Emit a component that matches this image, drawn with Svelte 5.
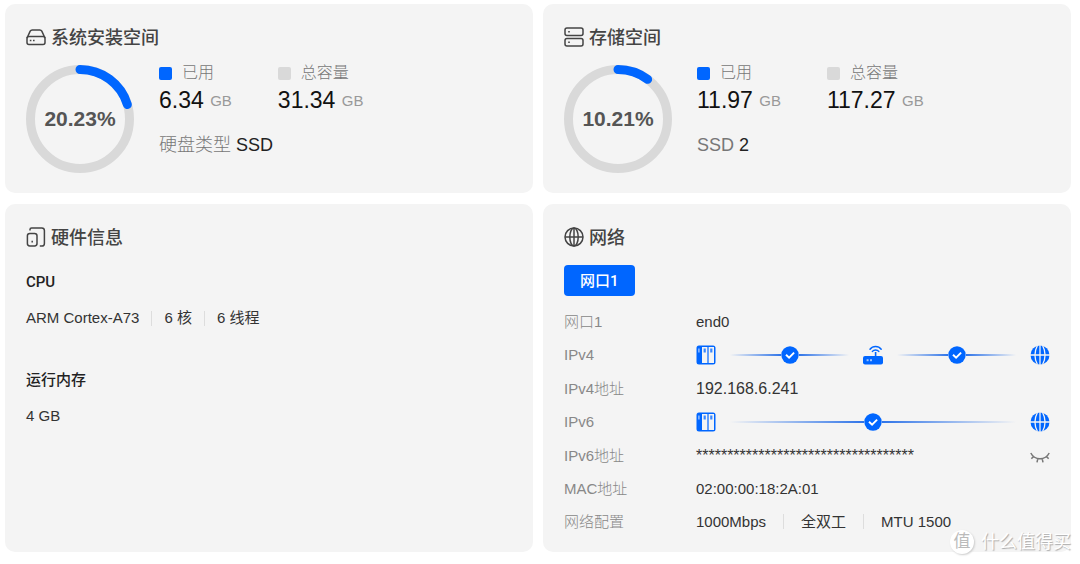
<script>
    const ringRadius = 49.5;
    const ringLength = 2 * Math.PI * ringRadius;

    const storages = [
        {
            title: '系统安装空间',
            icon: 'disk',
            percent: 20.23,
            used: '6.34',
            total: '31.34',
            type: '硬盘类型',
            typeValue: 'SSD'
        },
        {
            title: '存储空间',
            icon: 'stack',
            percent: 10.21,
            used: '11.97',
            total: '117.27',
            type: 'SSD',
            typeValue: '2'
        }
    ];

    const cpu = ['ARM Cortex-A73', '6 核', '6 线程'];
    const netConfig = ['1000Mbps', '全双工', 'MTU 1500'];

    let showIpv6 = $state(false);
    const ipv6 = 'fe80::18ff:fe00:2a01';
</script>

{#snippet nas()}
    <svg class="node" viewBox="0 0 20 20" aria-hidden="true">
        <rect x="0.5" y="0.5" width="19" height="19" rx="2.5" fill="#0066ff" />
        <rect x="6" y="2" width="5.4" height="16" fill="#f4f4f4" />
        <rect x="12.6" y="2" width="5.4" height="16" fill="#f4f4f4" />
        <rect x="2.2" y="3.5" width="1.4" height="4" fill="#9cc2ff" />
        <rect x="7.6" y="3.5" width="2.2" height="4" fill="#3a88ff" />
        <rect x="14.2" y="3.5" width="2.2" height="4" fill="#3a88ff" />
    </svg>
{/snippet}

{#snippet router()}
    <svg class="node" viewBox="0 0 20 20" aria-hidden="true">
        <path d="M7 4.2C9.8 0.6 15.4 0.6 18.2 4.2M9.4 6.4C11 4.4 14.2 4.4 15.8 6.4" fill="none" stroke="#0066ff" stroke-width="1.5" stroke-linecap="round" />
        <path d="M12.6 7V12" stroke="#0066ff" stroke-width="1.6" />
        <rect x="0" y="11" width="20" height="8.5" rx="2" fill="#0066ff" />
        <rect x="3.6" y="14.2" width="2" height="2" fill="#9cc2ff" />
        <rect x="7" y="14.2" width="2" height="2" fill="#9cc2ff" />
    </svg>
{/snippet}

{#snippet world()}
    <svg class="node" viewBox="0 0 20 20" aria-hidden="true">
        <circle cx="10" cy="10" r="9.5" fill="#0066ff" />
        <path d="M0 10H20M10 0V20M7.4 0.5C4.3 6.5 4.3 13.5 7.4 19.5M12.6 0.5C15.7 6.5 15.7 13.5 12.6 19.5" fill="none" stroke="#f4f4f4" stroke-width="1.3" />
    </svg>
{/snippet}

{#snippet link()}
    <span class="link">
        <span class="line"></span>
        <svg class="check" viewBox="0 0 18 18" aria-hidden="true">
            <circle cx="9" cy="9" r="8.7" fill="#0066ff" />
            <path d="M5 8.7L8.1 11.7L13.1 6.7" fill="none" stroke="#fff" stroke-width="1.9" />
        </svg>
        <span class="line right"></span>
    </span>
{/snippet}

<main>
    <div class="dashboard">
        <!-- Storage cards -->
        {#each storages as item}
            <section class="card">
                <h2>
                    <svg class="icon" viewBox="0 0 20 20" aria-hidden="true">
                        {#if item.icon === 'disk'}
                            <path d="M1 11L4.2 4.2Q4.8 3 6.2 3H13.8Q15.2 3 15.8 4.2L19 11" />
                            <rect x="1" y="9.5" width="18" height="8" rx="2" />
                            <path d="M3.8 13.5H5.4M7 13.5H8.6" />
                        {:else}
                            <rect x="1" y="1" width="18" height="7.5" rx="2" />
                            <rect x="1" y="11.5" width="18" height="7.5" rx="2" />
                            <path d="M4.2 4.8H5.8M4.2 15.2H5.8" />
                        {/if}
                    </svg>
                    <span>{item.title}</span>
                </h2>
                <div class="usage">
                    <div class="ring">
                        <svg viewBox="0 0 108 108" aria-hidden="true">
                            <circle class="track" cx="54" cy="54" r={ringRadius} />
                            <circle
                                class="bar"
                                cx="54"
                                cy="54"
                                r={ringRadius}
                                stroke-dasharray="{(ringLength * item.percent) / 100} {ringLength}"
                            />
                        </svg>
                        <strong>{item.percent}%</strong>
                    </div>
                    <div class="stats">
                        <div class="amounts">
                            <div>
                                <p class="legend"><i class="used"></i>已用</p>
                                <p class="amount">{item.used} <small>GB</small></p>
                            </div>
                            <div>
                                <p class="legend"><i></i>总容量</p>
                                <p class="amount">{item.total} <small>GB</small></p>
                            </div>
                        </div>
                        <p class="type"><span>{item.type}</span> {item.typeValue}</p>
                    </div>
                </div>
            </section>
        {/each}

        <!-- Hardware -->
        <section class="card">
            <h2>
                <svg class="icon" viewBox="0 0 20 20" aria-hidden="true">
                    <path d="M4 3.4V2.6Q4 1 5.6 1H15.8Q18.4 1 18.4 3.6V16.4Q18.4 19 15.8 19H13.8" />
                    <rect x="1.4" y="6.4" width="9.6" height="12.6" rx="2.4" />
                    <path d="M6.2 13.8V15.4" />
                </svg>
                <span>硬件信息</span>
            </h2>
            <div class="hardware">
                <h3>CPU</h3>
                <p class="parts">
                    {#each cpu as part}
                        <span>{part}</span>
                    {/each}
                </p>
                <h3>运行内存</h3>
                <p>4 GB</p>
            </div>
        </section>

        <!-- Network -->
        <section class="card network">
            <h2>
                <svg class="icon" viewBox="0 0 20 20" aria-hidden="true">
                    <circle cx="10" cy="10" r="9" />
                    <ellipse cx="10" cy="10" rx="4.2" ry="9" />
                    <path d="M1 10H19M10 1V19" />
                </svg>
                <span>网络</span>
            </h2>
            <button class="tab" type="button">网口1</button>
            <dl>
                <div class="row">
                    <dt>网口1</dt>
                    <dd>end0</dd>
                </div>
                <div class="row tall">
                    <dt>IPv4</dt>
                    <dd class="route">
                        {@render nas()}
                        {@render link()}
                        {@render router()}
                        {@render link()}
                        {@render world()}
                    </dd>
                </div>
                <div class="row">
                    <dt>IPv4地址</dt>
                    <dd class="address">192.168.6.241</dd>
                </div>
                <div class="row tall">
                    <dt>IPv6</dt>
                    <dd class="route">
                        {@render nas()}
                        {@render link()}
                        {@render world()}
                    </dd>
                </div>
                <div class="row">
                    <dt>IPv6地址</dt>
                    <dd class="address secret">
                        <span>{showIpv6 ? ipv6 : '*'.repeat(35)}</span>
                        <button class="eye" type="button" aria-label="IPv6地址" onclick={() => (showIpv6 = !showIpv6)}>
                            <svg viewBox="0 0 20 20" aria-hidden="true">
                                <path d="M0.8 7C4.6 14.6 15.4 14.6 19.2 7M3.6 10.2L1.4 12.8M7.8 12.6L7 16.4M12.2 12.6L13 16.4M16.4 10.2L18.6 12.8" />
                            </svg>
                        </button>
                    </dd>
                </div>
                <div class="row">
                    <dt>MAC地址</dt>
                    <dd>02:00:00:18:2A:01</dd>
                </div>
                <div class="row">
                    <dt>网络配置</dt>
                    <dd class="parts wide">
                        {#each netConfig as part}
                            <span>{part}</span>
                        {/each}
                    </dd>
                </div>
            </dl>
        </section>
    </div>

    <div class="watermark"><b>值</b>什么值得买</div>
</main>

<style>
    :global(body) {
        background: #fff;
    }

    main {
        position: relative;
        overflow: hidden;
        padding: 4px 9px 12px 5px;
        font-family: 'Liberation Sans', 'Noto Sans CJK SC', sans-serif;
        font-size: 15px;
        line-height: 20px;
        color: #333;
    }

    h2, h3, p, dl, dd {
        margin: 0;
    }

    .dashboard {
        display: grid;
        grid-template-columns: 1fr 1fr;
        gap: 11px 10px;
    }

    .card {
        padding: 20px 21px;
        background: #f4f4f4;
        border-radius: 10px;
    }

    h2 {
        display: flex;
        align-items: center;
        gap: 5px;
        height: 26px;
        font-size: 18px;
        font-weight: 500;
        line-height: 26px;
        color: #444;
    }

    h2 span {
        padding-top: 2px;
    }

    .icon {
        width: 20px;
        height: 20px;
        fill: none;
        stroke: #444;
        stroke-width: 1.5;
    }

    /* usage ring and numbers */
    .usage {
        display: flex;
        gap: 25px;
        margin-top: 15px;
    }

    .ring {
        display: grid;
        place-items: center;
        width: 108px;
        height: 108px;
    }

    .ring svg,
    .ring strong {
        grid-area: 1 / 1;
    }

    .ring svg {
        width: 108px;
        height: 108px;
        fill: none;
        stroke-width: 9;
        transform: rotate(-90deg);
    }

    .ring strong {
        font-size: 21px;
        color: #555;
    }

    .track {
        stroke: #d9d9d9;
    }

    .bar {
        stroke: #0066ff;
        stroke-linecap: round;
    }

    .amounts {
        display: flex;
        gap: 46px;
    }

    .legend {
        display: flex;
        align-items: center;
        gap: 10px;
        font-size: 16px;
        font-weight: 300;
        line-height: 16px;
        color: #777;
    }

    .legend i {
        width: 13px;
        height: 13px;
        border-radius: 2px;
        background: #d9d9d9;
    }

    .legend i.used {
        background: #0066ff;
    }

    .amount {
        height: 28px;
        margin-top: 5px;
        font-size: 23px;
        line-height: 28px;
        color: #111;
    }

    .amount small {
        font-size: 15px;
        line-height: 20px;
        vertical-align: 2px;
        color: #999;
    }

    .type {
        margin-top: 21px;
        font-size: 18px;
        color: #222;
    }

    .type span {
        font-weight: 300;
        color: #777;
    }

    /* hardware */
    .hardware {
        display: grid;
        gap: 16px;
        margin-top: 22px;
    }

    h3 {
        font-family: Roboto, 'Noto Sans CJK SC', sans-serif;
        font-size: 15px;
        font-weight: 500;
        color: #222;
    }

    p + h3 {
        margin-top: 26px;
    }

    .parts {
        display: flex;
        align-items: center;
    }

    .parts span + span {
        display: flex;
        align-items: center;
    }

    .parts span + span::before {
        content: '';
        width: 1px;
        height: 15px;
        margin: 0 12px;
        background: #ddd;
    }

    .parts.wide span + span::before {
        margin: 0 17px;
    }

    /* network */
    .network {
        padding-bottom: 14px;
    }

    .tab {
        display: block;
        height: 31px;
        margin: 15px 0 9px;
        padding: 0 16px 2px;
        border: 0;
        border-radius: 4px;
        background: #0066ff;
        color: #fff;
        font: 500 15px Roboto, 'Noto Sans CJK SC', sans-serif;
        cursor: pointer;
    }

    .row {
        display: grid;
        grid-template-columns: 132px 1fr;
        align-items: center;
        height: 33px;
    }

    .row.tall {
        height: 34px;
    }

    dt {
        font-weight: 300;
        color: #888;
    }

    .address {
        font-size: 16px;
    }

    .route {
        display: flex;
        align-items: center;
        gap: 14px;
    }

    .node {
        flex: none;
        width: 20px;
        height: 20px;
    }

    .link {
        flex: 1;
        display: flex;
        align-items: center;
    }

    .line {
        flex: 1;
        height: 2px;
        background: linear-gradient(to right, transparent, #2f74e8);
    }

    .line.right {
        background: linear-gradient(to left, transparent, #2f74e8);
    }

    .check {
        width: 18px;
        height: 18px;
    }

    .secret {
        display: flex;
        align-items: center;
        justify-content: space-between;
    }

    .eye {
        width: 20px;
        height: 20px;
        padding: 0;
        border: 0;
        background: none;
        cursor: pointer;
    }

    .eye svg {
        display: block;
        fill: none;
        stroke: #777;
        stroke-width: 1.5;
    }

    .watermark {
        position: absolute;
        right: 9px;
        bottom: 10px;
        display: flex;
        align-items: center;
        gap: 7px;
        font-size: 18px;
        line-height: 24px;
        color: #fff;
        text-shadow: 1px 1px 1px #aaa;
    }

    .watermark b {
        width: 24px;
        border-radius: 50%;
        background: #fff;
        box-shadow: 1px 1px 2px #ccc;
        font-size: 17px;
        font-weight: 400;
        text-align: center;
        text-shadow: none;
        color: #bbb;
    }
</style>
